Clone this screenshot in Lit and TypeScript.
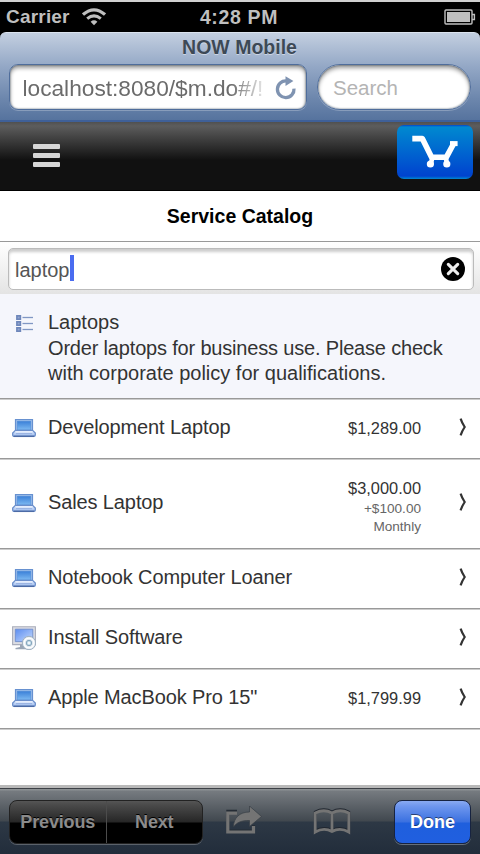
import { LitElement, html, css, svg, nothing } from "lit";
import { customElement, property } from "lit/decorators.js";

interface CatalogItem {
  name: string;
  icon: "laptop" | "software";
  price?: string;
  recurring?: string[];
}

const ITEMS: CatalogItem[] = [
  { name: "Development Laptop", icon: "laptop", price: "$1,289.00" },
  { name: "Sales Laptop", icon: "laptop", price: "$3,000.00", recurring: ["+$100.00", "Monthly"] },
  { name: "Notebook Computer Loaner", icon: "laptop" },
  { name: "Install Software", icon: "software" },
  { name: 'Apple MacBook Pro 15"', icon: "laptop", price: "$1,799.99" },
];

const laptopIcon = svg`<svg width="24" height="24" viewBox="0 0 24 24">
  <defs>
    <linearGradient id="scr" x1="0" y1="0" x2="0" y2="1"><stop offset="0" stop-color="#3a80d8"/><stop offset="1" stop-color="#7ebaf2"/></linearGradient>
    <linearGradient id="base" x1="0" y1="0" x2="0" y2="1"><stop offset="0" stop-color="#d5e3fa"/><stop offset="1" stop-color="#a3bfef"/></linearGradient>
  </defs>
  <path d="M3.6 3.6H20.4V15H3.6Z" fill="#b9d3f5" stroke="#6791d0" stroke-width="1.4"/>
  <path d="M5.2 5.2H18.8V14H5.2Z" fill="url(#scr)" stroke="#4a86d4" stroke-width=".6"/>
  <path d="M3.4 14.4H20.6L23.3 17V19Q23.3 20.4 21.8 20.4H2.2Q.7 20.4 .7 19V17Z" fill="url(#base)" stroke="#6a8ecb" stroke-width="1.3"/>
  <path d="M3.4 15.9H20.6" stroke="#eef4ff" stroke-width="1.2"/>
  <path d="M4 17.7H20" stroke="#8eaade" stroke-width=".9"/>
  <path d="M1.8 20.3H22.2" stroke="#4c6ba6" stroke-width="1.5"/>
</svg>`;

const softwareIcon = svg`<svg width="24" height="24" viewBox="0 0 24 24">
  <defs><linearGradient id="mon" x1="0" y1="0" x2="1" y2="1"><stop offset="0" stop-color="#5c8df0"/><stop offset="1" stop-color="#c5dafd"/></linearGradient></defs>
  <path d="M.6 .7H23.4V18.6H.6Z" fill="#dcdde3" stroke="#a9adbb" stroke-width="1.1"/>
  <path d="M3.3 3.2H20.8V15.6H3.3Z" fill="url(#mon)" stroke="#6f8dcc" stroke-width=".9"/>
  <path d="M8 18.8H13V21.5H15V23.3H3.5V22L8 21Z" fill="#9aa5b5"/>
  <circle cx="17" cy="17" r="6.7" fill="#e3eaf1" stroke="#9fb0c0" stroke-width="1"/>
  <circle cx="17" cy="17" r="4.9" fill="none" stroke="#fff" stroke-width="1.2"/>
  <circle cx="17" cy="17" r="2.7" fill="#c4dcea" stroke="#86a6bc" stroke-width="1"/>
  <circle cx="17" cy="17" r="1" fill="#fff"/>
</svg>`;

@customElement("status-bar")
class StatusBar extends LitElement {
  static styles = css`
    :host { display: grid; grid-template-columns: 1fr auto 1fr; align-items: center; box-sizing: border-box;
      height: 32px; border-top: 2px solid #d0d0d0; padding: 0 4px 0 6px; background: #000; color: #bfbfbf;
      font-weight: bold; font-size: 19px; line-height: 30px; }
    .left { display: flex; align-items: center; gap: 12px; letter-spacing: 0.2px; }
    .clock { font-size: 19.5px; letter-spacing: 0.65px; margin-left: -4px; }
    .wifi { margin-top: -1px; }
    .battery { justify-self: end; }
    svg { display: block; }
  `;
  render() {
    return html`
      <div class="left"><span>Carrier</span>
        <svg class="wifi" width="24" height="18" viewBox="0 0 24 18" fill="none" stroke="#bfbfbf">
          <path d="M1 6.6Q12 -3 23 6.6" stroke-width="3.2"/>
          <path d="M5.2 10.7Q12 5 18.8 10.7" stroke-width="3"/>
          <path d="M8.6 13.7Q12 11 15.4 13.7L12 17.3Z" fill="#bfbfbf" stroke="none"/>
        </svg>
      </div>
      <div class="clock">4:28 PM</div>
      <svg class="battery" width="32" height="16" viewBox="0 0 32 16">
        <rect x="1" y="1" width="27" height="14" rx="1" fill="none" stroke="#bfbfbf" stroke-width="1.4"/>
        <rect x="3" y="3" width="23" height="10" fill="#bfbfbf"/>
        <path d="M28 5.5H30.4V10.5H28" fill="none" stroke="#bfbfbf" stroke-width="1.4"/>
      </svg>`;
  }
}

@customElement("browser-bar")
class BrowserBar extends LitElement {
  static styles = css`
    :host { display: block; box-sizing: border-box; height: 90px; background: #000; }
    .panel { box-sizing: border-box; height: 90px; padding: 0 9px; border-radius: 6px 6px 0 0;
      background: linear-gradient(#c3cfe0, #94a8c6 38%, #6d87ad 75%, #56739e); border-top: 1px solid #dbe3ee;
      border-bottom: 2px solid #3f6098; }
    .title { text-align: center; font-weight: bold; font-size: 19.5px; line-height: 28px; height: 31px; margin-left: -1px;
      color: #3d4956; text-shadow: 0 1px 0 rgba(255, 255, 255, 0.45); }
    .fields { display: flex; gap: 10px; }
    .field { box-sizing: border-box; height: 46px; border: 1px solid #4f6d9b; background: #fff;
      box-shadow: inset 0 3px 4px rgba(0, 0, 0, 0.4), inset 0 0 2px #567, 0 1px 0 rgba(255, 255, 255, 0.25);
      display: flex; align-items: center; }
    .url { width: 298px; border-radius: 9px; padding: 1px 9px 0 12.5px; justify-content: space-between; }
    .address { width: 246px; overflow: hidden; white-space: nowrap; font-size: 22.7px; line-height: 30px; color: #6b6b6b;
      -webkit-mask-image: linear-gradient(90deg, #000 208px, transparent 247px); }
    .search { width: 154px; border-radius: 23px; padding: 1px 15px 0; font-size: 20.5px; color: #b4b4b4; }
    svg { display: block; flex: none; }
  `;
  render() {
    return html`<div class="panel">
      <div class="title">NOW Mobile</div>
      <div class="fields">
        <div class="field url"><span class="address">localhost:8080/$m.do#/!</span>
          <svg width="22" height="24" viewBox="0 0 22 24">
            <path d="M19 12.6A8.3 8.3 0 1 1 11.5 5" fill="none" stroke="#7f93b1" stroke-width="3.3"/>
            <path d="M10.5 .2L18.4 5L10.5 10Z" fill="#7f93b1"/>
          </svg>
        </div>
        <div class="field search">Search</div>
      </div>
    </div>`;
  }
}

@customElement("app-header")
class AppHeader extends LitElement {
  static styles = css`
    :host { display: flex; justify-content: space-between; align-items: flex-start; box-sizing: border-box; height: 69px;
      padding: 3px 7px 0 33px; background: linear-gradient(#505050, #5d5d5d 4px, #484848 13px, #111 38px); border-bottom: 1px solid #000; }
    .menu { display: flex; flex-direction: column; gap: 4px; margin-top: 19px; }
    .bar { width: 27px; height: 5px; border-radius: 1px; background: #d6d6d6; }
    .cart { box-sizing: border-box; width: 76px; height: 54px; border-radius: 7px;
      background: linear-gradient(#0743c8, #0089d0 2px, #0043cf 51px, #0089d0); display: flex; }
    .cart svg { margin: 9px 0 0 14px; flex: none; }
  `;
  render() {
    return html`<div class="menu"><div class="bar"></div><div class="bar"></div><div class="bar"></div></div>
      <div class="cart"><svg width="48" height="36" viewBox="0 0 48 36" fill="none" stroke="#fff" stroke-linejoin="round">
        <path d="M1.3 4.6H11.3L20.6 23.2H35.4L43.3 8.5" stroke-width="5.6"/>
        <path d="M39 9.6H46.6" stroke-width="5"/>
        <path d="M21.5 23L19.8 30M34.8 23L36 30" stroke-width="4.6"/>
        <circle cx="19.4" cy="30" r="3.6" fill="#fff" stroke="none"/>
        <circle cx="35.8" cy="30" r="3.6" fill="#fff" stroke="none"/>
      </svg></div>`;
  }
}

@customElement("catalog-row")
class CatalogRow extends LitElement {
  @property({ attribute: false }) item!: CatalogItem;
  static styles = css`
    :host { display: block; border-bottom: 1px solid #ccc; }
    .row { display: flex; align-items: center; box-sizing: border-box; min-height: 59px; padding: 0 12px;
      border-bottom: 1px solid #999; }
    .row.tall { min-height: 89px; }
    .icon { width: 24px; height: 24px; margin: -2px 12px 0 0; }
    .name { flex: 1; font-size: 20px; line-height: 26px; letter-spacing: -0.12px; color: #333; padding-bottom: 5px; }
    .cost { text-align: right; color: #333; font-size: 16.4px; line-height: 22px; margin-right: 38px; padding-bottom: 2px; }
    .tall .cost { padding: 3px 0 0; }
    .recurring { font-size: 13.6px; line-height: 18px; color: #666; position: relative; top: 1px; }
    .chevron { width: 9px; height: 18px; margin-top: -4px; }
    svg { display: block; flex: none; }
  `;
  render() {
    const { name, icon, price, recurring } = this.item;
    return html`<div class="row ${recurring ? "tall" : ""}">
      <div class="icon">${icon === "laptop" ? laptopIcon : softwareIcon}</div>
      <div class="name">${name}</div>
      ${price
        ? html`<div class="cost">${price}${recurring?.map((r) => html`<div class="recurring">${r}</div>`)}</div>`
        : nothing}
      <svg class="chevron" viewBox="0 0 9 18"><path d="M1.6 .6Q3 5 5.7 9Q3 13 1.6 17.4" fill="none" stroke="#333" stroke-width="2.2"/></svg>
    </div>`;
  }
}

@customElement("bottom-toolbar")
class BottomToolbar extends LitElement {
  static styles = css`
    :host { display: flex; align-items: flex-start; box-sizing: border-box; height: 69px; padding: 13px 9px 0;
      border-top: 2px solid #b9b9b9; font-weight: bold; font-size: 18px; text-align: center;
      background: linear-gradient(#b9b9b9 0 1px, #3c4046 1px 2px, #8b9093 2px 3px, #767b80 4px, #41484f 34px, #2d3845 35px, #222d3b); }
    .pair { display: flex; flex: none; box-sizing: border-box; width: 194px; height: 44px; border-radius: 8px; overflow: hidden;
      border: 1px solid #222; box-shadow: 0 1px 0 #5b626b;
      background: linear-gradient(#555, #4a4a4a 4px, #262626 21px, #000 22px); color: #8b8b8b; text-shadow: 0 -1px 0 #000; }
    .pair span { flex: 1; line-height: 43px; letter-spacing: -0.15px; }
    .pair span + span { border-left: 1px solid #4c4c4c; }
    .done { box-sizing: border-box; flex: none; width: 77px; height: 44px; border: 1px solid #172340; border-radius: 8px;
      background: linear-gradient(#8aaaf2, #6f97ee 5px, #3a70e0 21px, #1f5fdd 22px, #205fe0); color: #fff; line-height: 43px;
      box-shadow: 0 1px 0 #66707c; text-shadow: 0 -1px 0 rgba(0, 0, 0, 0.5); margin-left: auto; }
    .share { margin: 6px 0 0 22px; }
    .book { margin: 8px 0 0 51px; }
    svg { display: block; flex: none; }
  `;
  render() {
    return html`<div class="pair"><span>Previous</span><span>Next</span></div>
      <svg class="share" width="37" height="30" viewBox="0 0 37 30">
        <path d="M12 6.2H2.8V26H28.5V20" fill="none" stroke="#252c35" stroke-width="3" transform="translate(0 -1)"/>
        <path d="M12 7.2H2.8V26H28.5V20" fill="none" stroke="#747474" stroke-width="3.2"/>
        <path d="M8.5 21C8.5 12 14.5 6 24.5 6V0L36.5 10.5L24.5 20.5V14.5C16.5 14.5 12 16 8.5 21Z" fill="#747474" stroke="#363d45" stroke-width=".7"/>
      </svg>
      <svg class="book" width="38" height="28" viewBox="0 0 38 28">
        <path d="M2.2 23V4Q11 -.5 19 4Q27 -.5 35.8 4V23Q27 18 19 22.5Q11 18 2.2 23ZM19 4V22" fill="none" stroke="#20262f" stroke-width="2.8"/>
        <path d="M2.2 24V5Q11 .5 19 5Q27 .5 35.8 5V24Q27 19 19 23.5Q11 19 2.2 24ZM19 5V23" fill="none" stroke="#747474" stroke-width="2.8"/>
      </svg>
      <div class="done">Done</div>`;
  }
}

@customElement("app-root")
class AppRoot extends LitElement {
  static styles = css`
    :host { display: flex; flex-direction: column; width: 480px; height: 854px; overflow: hidden; background: #fff;
      font-family: "Liberation Sans", Arial, sans-serif; color: #333; }
    .heading { box-sizing: border-box; height: 51px; border-bottom: 1px solid #999; text-align: center; font-weight: bold;
      font-size: 19.5px; line-height: 50px; color: #000; }
    .searchbar { box-sizing: border-box; height: 52px; padding: 6px 6px 4px 8px; background: linear-gradient(#fff, #e4e4e4); }
    .input { box-sizing: border-box; height: 42px; border: 1px solid #bbb; border-radius: 5px; background: #fff;
      box-shadow: inset 0 3px 3px rgba(0, 0, 0, 0.2); display: flex; align-items: center; padding: 0 8px 0 6px; font-size: 20px; color: #555; }
    .input span { padding-top: 2px; }
    .caret { width: 4.5px; height: 26px; background: #4a6cf0; margin: -2px auto 0 0; }
    .category { box-sizing: border-box; height: 105px; border-bottom: 1px solid #999; background: #f5f6fc; display: flex;
      padding: 16px 16px 0; font-size: 20px; line-height: 25.6px; }
    .category svg { margin: 5px 15px 0 0; flex: none; }
    .category p { margin: 0; }
    .line { display: block; white-space: nowrap; }
    .intro { letter-spacing: -0.18px; }
    .list { flex: 1; border-top: 1px solid #ccc; }
    svg { display: block; }
  `;
  render() {
    return html`<status-bar></status-bar>
      <browser-bar></browser-bar>
      <app-header></app-header>
      <div class="heading">Service Catalog</div>
      <div class="searchbar"><div class="input"><span>laptop</span><i class="caret"></i>
        <svg width="24" height="24" viewBox="0 0 24 24"><circle cx="12" cy="12" r="12" fill="#000"/><path d="M7.3 7.3L16.7 16.7M16.7 7.3L7.3 16.7" stroke="#eee" stroke-width="3.1" stroke-linecap="round"/></svg>
      </div></div>
      <div class="category">
        <svg width="17" height="17" viewBox="0 0 17 17">
          ${[0, 6, 12].map((y) => svg`<rect x=".9" y=${y + 0.8} width="3.5" height="3.4" fill="#93a6d0" stroke="#6d86ba" stroke-width="1.6"/><path d=${`M6.5 ${y + 2.5}H17`} stroke="#8197c4" stroke-width="1.3"/>`)}
        </svg>
        <p><span class="line">Laptops</span><span class="line intro">Order laptops for business use. Please check</span><span class="line">with corporate policy for qualifications.</span></p>
      </div>
      <div class="list">${ITEMS.map((item) => html`<catalog-row .item=${item}></catalog-row>`)}</div>
      <bottom-toolbar></bottom-toolbar>`;
  }
}
